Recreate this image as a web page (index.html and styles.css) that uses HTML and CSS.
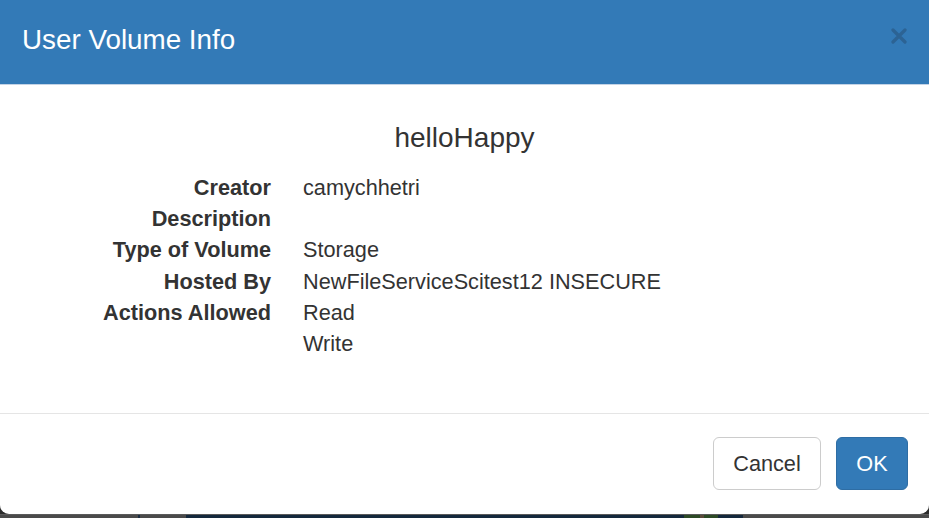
FILE: index.html
```html
<!DOCTYPE html>
<html>
<head>
<meta charset="utf-8">
<link rel="stylesheet" href="styles.css">
</head>
<body>
<div class="page">
  <div class="modal">
    <div class="modal-header">
      <h4 class="modal-title">User Volume Info</h4>
      <button class="close" aria-label="Close">
        <svg width="16" height="16" viewBox="0 0 16 16"><path d="M2 2 L14 14 M14 2 L2 14" stroke="#2c6394" stroke-width="3.2" stroke-linecap="round" fill="none"/></svg>
      </button>
    </div>
    <div class="modal-body">
      <h4 class="volume-name">helloHappy</h4>
      <dl class="info">
        <dt>Creator</dt><dd>camychhetri</dd>
        <dt>Description</dt><dd></dd>
        <dt>Type of Volume</dt><dd>Storage</dd>
        <dt>Hosted By</dt><dd>NewFileServiceScitest12 INSECURE</dd>
        <dt>Actions Allowed</dt><dd>Read<br>Write</dd>
      </dl>
    </div>
    <div class="modal-footer">
      <button class="btn btn-default">Cancel</button>
      <button class="btn btn-primary">OK</button>
    </div>
  </div>
  <div class="backdrop">
    <div class="seg seg-grey1"></div>
    <div class="seg seg-line"></div>
    <div class="seg seg-grey2"></div>
    <div class="seg seg-navy1"></div>
    <div class="seg seg-green1"></div>
    <div class="seg seg-brown"></div>
    <div class="seg seg-green2"></div>
    <div class="seg seg-navy2"></div>
    <div class="seg seg-grey3"></div>
  </div>
</div>
</body>
</html>
```

FILE: styles.css
```css
* { box-sizing: border-box; }
html, body {
  margin: 0;
  padding: 0;
  background: #2c2c2c;
  font-family: "Liberation Sans", Arial, sans-serif;
  color: #333;
}
.page {
  width: 929px;
  height: 518px;
  overflow: hidden;
  display: flex;
  flex-direction: column;
}
.modal {
  background: #fff;
  height: 514px;
  border-radius: 0 0 9px 9px;
  display: flex;
  flex-direction: column;
  flex: none;
}
.modal-header {
  background: #337ab7;
  height: 85px;
  border-bottom: 1px solid #c3d3e6;
  padding: 0 23px 4px 22px;
  display: flex;
  align-items: center;
  justify-content: space-between;
  flex: none;
}
.modal-title {
  margin: 0;
  font-size: 27.8px;
  font-weight: normal;
  color: #fff;
  line-height: 40px;
}
.close {
  background: none;
  border: 0;
  padding: 0;
  width: 18px;
  height: 18px;
  display: flex;
  align-items: center;
  justify-content: center;
  position: relative;
  top: -4px;
  right: -2px;
}
.modal-body {
  height: 328px;
  padding: 12px 23px 0 23px;
  flex: none;
}
.volume-name {
  margin: 0 0 14px 0;
  font-size: 28px;
  font-weight: normal;
  text-align: center;
  line-height: 40px;
  color: #333;
  padding-top: 21px;
}
.info {
  margin: 0;
  display: grid;
  grid-template-columns: 248px 1fr;
  column-gap: 32px;
  font-size: 21.7px;
  line-height: 31.2px;
}
.info dt {
  font-weight: bold;
  text-align: right;
  white-space: nowrap;
}
.info dd {
  margin: 0;
  min-height: 31.2px;
}
.modal-footer {
  border-top: 1px solid #e5e5e5;
  padding: 23px 21px 0 23px;
  display: flex;
  justify-content: flex-end;
  gap: 15px;
  flex: 1;
  align-items: flex-start;
}
.btn {
  font-family: "Liberation Sans", Arial, sans-serif;
  font-size: 21.7px;
  height: 53px;
  padding: 0 18px;
  border-radius: 6px;
  border: 1px solid;
  line-height: 1;
}
.btn-default {
  background: #fff;
  border-color: #ccc;
  color: #333;
  width: 108px;
}
.btn-primary {
  background: #337ab7;
  border-color: #2e6da4;
  color: #fff;
  width: 72px;
}
.backdrop {
  flex: 1;
  display: flex;
  border-top: 1px solid #5a5a5a;
}
.seg { height: 100%; }
.seg-grey1 { width: 138px; background: #4a4a4a; }
.seg-line { width: 2px; background: #1a2c40; }
.seg-grey2 { width: 46px; background: #4a4a4a; }
.seg-navy1 { width: 498px; background: #14283c; }
.seg-green1 { width: 16px; background: #2d4a26; }
.seg-brown { width: 4px; background: #5a4a3a; }
.seg-green2 { width: 14px; background: #2d4a26; }
.seg-navy2 { width: 25px; background: #14283c; }
.seg-grey3 { flex: 1; background: #4a4a4a; }
```
